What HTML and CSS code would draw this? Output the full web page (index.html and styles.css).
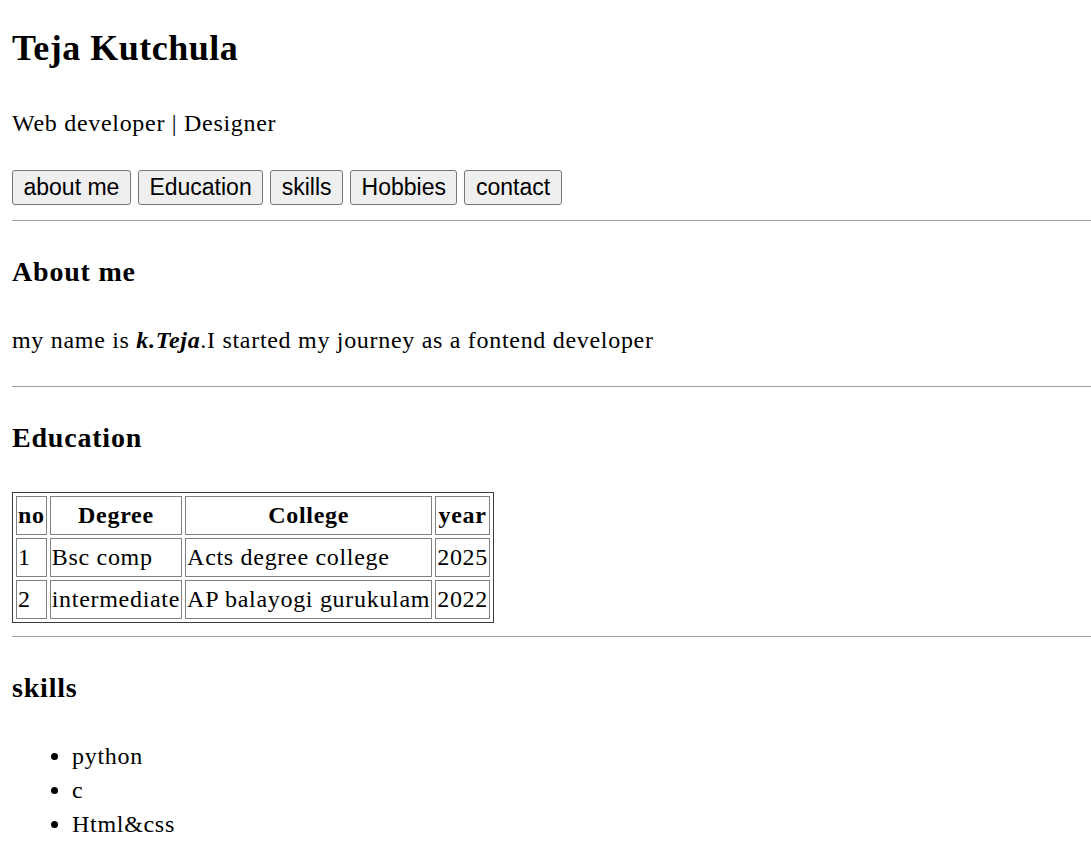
FILE: index.html
```html
<!DOCTYPE html>
<html lang="en">
<head>
<meta charset="utf-8">
<title>Teja Kutchula</title>
<link rel="stylesheet" href="styles.css">
</head>
<body>
<h1 class="name">Teja Kutchula</h1>
<p class="tagline">Web developer | Designer</p>
<nav class="nav">
  <button class="btn">about me</button>
  <button class="btn">Education</button>
  <button class="btn">skills</button>
  <button class="btn">Hobbies</button>
  <button class="btn">contact</button>
</nav>
<hr class="rule rule-first">
<h3 class="section-title">About me</h3>
<p class="about">my name is <b><i>k.Teja</i></b>.I started my journey as a fontend developer</p>
<hr class="rule rule-about">
<h3 class="section-title">Education</h3>
<table class="edu">
  <tr><th>no</th><th>Degree</th><th>College</th><th>year</th></tr>
  <tr><td>1</td><td>Bsc comp</td><td>Acts degree college</td><td>2025</td></tr>
  <tr><td>2</td><td>intermediate</td><td>AP balayogi gurukulam</td><td>2022</td></tr>
</table>
<hr class="rule rule-edu">
<h3 class="section-title">skills</h3>
<ul class="skills">
  <li>python</li>
  <li>c</li>
  <li>Html&amp;css</li>
</ul>
</body>
</html>
```

FILE: styles.css
```css
html, body {
  background: #ffffff;
}
body {
  margin: 0 0 0 12px;
  font-family: "Liberation Serif", "Times New Roman", serif;
  font-size: 24px;
  letter-spacing: 0.7px;
  color: #000000;
}
.name {
  font-size: 36px;
  line-height: 44px;
  font-weight: bold;
  letter-spacing: 0.5px;
  margin: 26px 0 0;
}
.tagline {
  margin: 37px 0 0;
  line-height: 32px;
}
.nav {
  display: flex;
  gap: 7px;
  margin-top: 31px;
}
.btn {
  font-family: "Liberation Sans", Arial, sans-serif;
  font-size: 23px;
  line-height: 27px;
  letter-spacing: 0;
  padding: 3px 10.5px;
  border: 1px solid #767676;
  border-radius: 3px;
  background: #efefef;
  color: #000000;
  margin: 0;
}
.rule {
  border: 0;
  border-top: 1px solid #a0a0a0;
  height: 0;
  margin: 0;
}
.rule-first { margin-top: 15px; }
.rule-about { margin-top: 30px; }
.rule-edu { margin-top: 13px; }
.section-title {
  font-size: 28px;
  line-height: 36px;
  font-weight: bold;
  letter-spacing: 0.8px;
  margin: 33px 0 0;
}
.about {
  margin: 34px 0 0;
  line-height: 32px;
}
.edu {
  margin-top: 36px;
  border: 1px solid #3c3c3c;
  border-spacing: 3px;
  font-size: 24px;
  letter-spacing: 0.7px;
}
.edu th, .edu td {
  border: 1px solid #808080;
  padding: 1px;
  line-height: 35px;
}
.edu th {
  font-weight: bold;
  text-align: center;
}
.edu td {
  text-align: left;
}
.skills {
  margin: 33px 0 0;
  padding-left: 60px;
  line-height: 34px;
}
```
